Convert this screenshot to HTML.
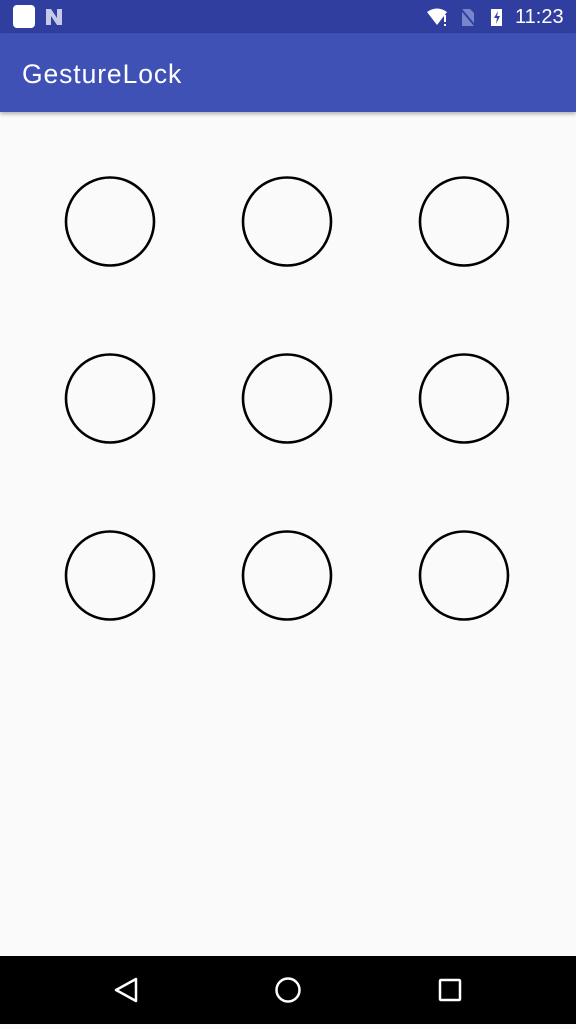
<!DOCTYPE html>
<html><head><meta charset="utf-8"><style>
body{margin:0;width:576px;height:1024px;background:#fafafa;font-family:"Liberation Sans",sans-serif;position:relative;overflow:hidden}
.sb{position:absolute;top:0;left:0;width:576px;height:33px;background:#303f9f}
.ab{position:absolute;top:33px;left:0;width:576px;height:79px;background:#3f51b5;box-shadow:0 2px 4px rgba(0,0,0,.3)}
.ab span{position:absolute;left:22px;top:26px;color:#fff;font-size:26.5px;letter-spacing:0.9px}
.nav{position:absolute;bottom:0;left:0;width:576px;height:68px;background:#000}
</style></head><body>
<div class="sb">
<div style="position:absolute;left:13px;top:5px;width:22px;height:23px;background:#fff;border-radius:4px"></div>
<svg style="position:absolute;left:44px;top:7px" width="20" height="20"><path d="M2 2h5l6 9V2h5v16h-5L7 9v9H2z" fill="#c5cae9"/></svg>
<svg style="position:absolute;left:425px;top:6px" width="90" height="22"><path d="M2 6Q12-1 22 6L12 19z" fill="#fff"/><rect x="19" y="9" width="2" height="7" fill="#fff"/><rect x="19" y="18" width="2" height="2" fill="#fff"/><path d="M37 3h8l4 4v13H37z" fill="#7986cb"/><path d="M35 2l16 19" stroke="#303f9f" stroke-width="2"/><rect x="66" y="3" width="11" height="17" fill="#fff"/><path d="M73 5l-4 7h3l-1 6 4-8h-3z" fill="#303f9f"/></svg>
<span style="position:absolute;left:515px;top:6px;color:#fff;font-size:20px">11:23</span>
</div>
<div class="ab"><span>GestureLock</span></div>
<svg style="position:absolute;left:0;top:0" width="576" height="700" fill="none" stroke="#000" stroke-width="2.6">
<circle cx="110" cy="221.5" r="44"/><circle cx="287" cy="221.5" r="44"/><circle cx="464" cy="221.5" r="44"/>
<circle cx="110" cy="398.5" r="44"/><circle cx="287" cy="398.5" r="44"/><circle cx="464" cy="398.5" r="44"/>
<circle cx="110" cy="575.5" r="44"/><circle cx="287" cy="575.5" r="44"/><circle cx="464" cy="575.5" r="44"/>
</svg>
<div class="nav"><svg width="576" height="68" fill="none" stroke="#fff" stroke-width="2.5">
<path d="M136 23L116 34L136 45z" stroke-linejoin="round"/><circle cx="288" cy="34" r="11.5"/><rect x="440" y="24" width="20" height="20" rx="1"/></svg></div>
</body></html>
